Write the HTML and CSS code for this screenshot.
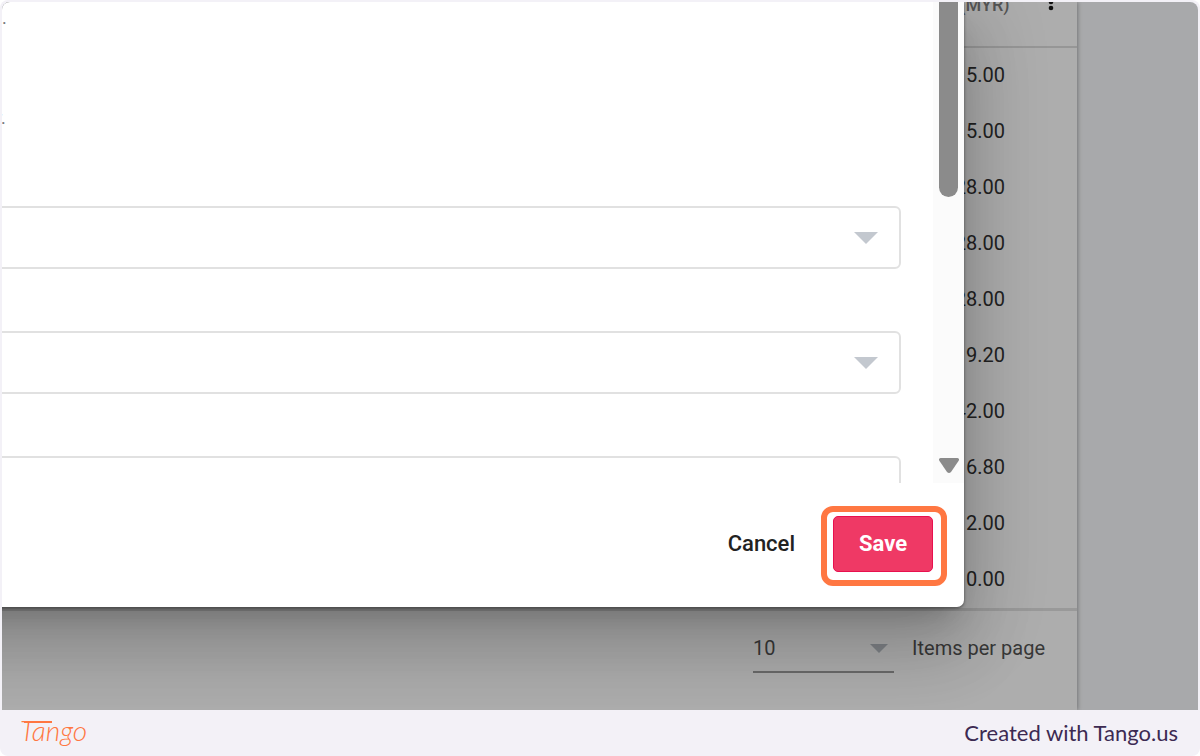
FILE: index.html
```html
<!DOCTYPE html>
<html lang="en">
<head>
<meta charset="utf-8">
<title>Save changes</title>
<meta name="viewport" content="width=device-width, initial-scale=1">
<link rel="stylesheet" href="styles.css">
</head>
<body>
<div class="frame">
  <main class="stage">
    <section class="panel">
      <table class="prices">
        <thead>
          <tr>
            <th scope="col">(MYR)
              <button class="column-menu" type="button" aria-label="Column menu">
                <svg width="6" height="22" viewBox="0 0 6 22"><circle cx="3" cy="7" r="2.3"/><circle cx="3" cy="13" r="2.3"/><circle cx="3" cy="19" r="2.3"/></svg>
              </button>
            </th>
          </tr>
        </thead>
        <tbody>
          <tr><td>5.00</td></tr>
          <tr><td>5.00</td></tr>
          <tr><td>28.00</td></tr>
          <tr><td>28.00</td></tr>
          <tr><td>28.00</td></tr>
          <tr><td>9.20</td></tr>
          <tr><td>42.00</td></tr>
          <tr><td>6.80</td></tr>
          <tr><td>2.00</td></tr>
          <tr><td>0.00</td></tr>
        </tbody>
      </table>
      <div class="paginator">
        <div class="page-size">
          <select id="page-size"><option>10</option></select>
          <svg class="page-arrow" width="18" height="9" viewBox="0 0 18 9"><path d="M0 0H18L9 9Z"/></svg>
        </div>
        <label for="page-size">Items per page</label>
      </div>
    </section>

    <div class="dialog" role="dialog" aria-label="Edit">
      <div class="dialog-body">
        <form class="fields">
          <p class="note">.</p>
          <p class="note note-second">r.</p>
          <div class="field">
            <select aria-label="First option"><option></option></select>
            <svg class="field-arrow" width="24" height="12" viewBox="0 0 24 12"><path d="M0 0H24L12 12Z"/></svg>
          </div>
          <div class="field">
            <select aria-label="Second option"><option></option></select>
            <svg class="field-arrow" width="24" height="12" viewBox="0 0 24 12"><path d="M0 0H24L12 12Z"/></svg>
          </div>
          <div class="field">
            <select aria-label="Third option"><option></option></select>
          </div>
        </form>
        <div class="scrollbar" aria-hidden="true">
          <div class="thumb"></div>
          <svg width="22" height="17" viewBox="0 0 22 17"><path d="M2.5 1H19.5Q22 1.5 20.5 4L13 15Q11 17 9 15L1.500 4Q0 1.500 2.500 1Z"/></svg>
        </div>
      </div>
      <div class="actions">
        <button class="cancel" type="button">Cancel</button>
        <div class="highlight"><button class="save" type="button">Save</button></div>
      </div>
    </div>
  </main>

  <footer class="credit">
    <svg class="logo" width="72" height="36" viewBox="0 0 72 36" role="img" aria-label="Tango">
      <text x="0" y="26">Tango</text>
      <path d="M4 7H32"/>
    </svg>
    <span>Created with Tango.us</span>
  </footer>
</div>
</body>
</html>
```
FILE: styles.css
```css
* {
  box-sizing: border-box;
}

body {
  margin: 0;
  background: #fff;
  color: #222;
  font-family: Roboto, "Liberation Sans", sans-serif;
  font-size: 20px;
  line-height: 24px;
}

button,
select {
  margin: 0;
  padding: 0;
  border: 0;
  background: none;
  color: inherit;
  font: inherit;
  appearance: none;
}

.frame {
  display: flex;
  flex-direction: column;
  height: 100vh;
  padding: 2px 2px 0;
  border-radius: 8px;
  background: #f3f1f7;
  overflow: hidden;
}

.stage {
  position: relative;
  flex: 1;
  min-height: 0;
  padding-right: 121px;
  border-radius: 8px 8px 0 0;
  background: #a8a9ab;
  overflow: hidden;
}

.panel {
  height: 100%;
  background: #adadad;
  box-shadow: 1px 0 4px rgba(0, 0, 0, 0.3);
}

.prices {
  width: 100%;
  border-collapse: separate;
  border-spacing: 0;
  text-align: right;
}

.prices th {
  height: 46px;
  padding: 0 23px 39px 0;
  border-bottom: 2px solid #969696;
  color: #555;
  font-size: 18px;
  font-weight: 500;
  line-height: 5px;
  vertical-align: bottom;
}

.column-menu {
  margin-left: 34px;
  vertical-align: bottom;
}

.column-menu svg {
  display: block;
  margin-top: -16px;
  margin-bottom: -4px;
  fill: #111;
}

.prices td {
  height: 56px;
  padding: 0 72px 2px 0;
}

.paginator {
  display: flex;
  align-items: center;
  justify-content: flex-end;
  gap: 18px;
  padding: 14px 32px 0 0;
  border-top: 3px solid #999;
  color: #383838;
}

.paginator label {
  padding-bottom: 2px;
}

.page-size {
  display: flex;
  align-items: center;
  width: 141px;
  height: 48px;
  border-bottom: 2px solid #6b6b6b;
}

.page-size select {
  flex: 1;
  height: 44px;
}

.page-arrow {
  margin-right: 6px;
  fill: #7f8387;
}

.dialog {
  position: absolute;
  inset: 0 234px 103px -100px;
  display: flex;
  flex-direction: column;
  border-radius: 0 0 7px 0;
  background: #fff;
  box-shadow: 0 1px 3px rgba(0, 0, 0, 0.5), 0 16px 26px -12px rgba(0, 0, 0, 0.2),
    0 42px 66px 5px rgba(0, 0, 0, 0.14), 0 16px 80px 14px rgba(0, 0, 0, 0.12);
}

.dialog-body {
  display: flex;
  flex: 1;
  min-height: 0;
  overflow: hidden;
}

.fields {
  flex: 1;
  padding: 0 32px 0 92px;
}

.note {
  height: 24px;
  margin: 0 0 76px;
  padding: 4px 0 0 8px;
  color: #777;
  font-size: 18px;
}

.note-second {
  margin-bottom: 80px;
  padding-left: 2px;
}

.field {
  display: flex;
  align-items: center;
  height: 63px;
  margin-bottom: 62px;
  border: 2px solid #e1e1e1;
  border-radius: 6px;
}

.field select {
  flex: 1;
  height: 100%;
}

.field-arrow {
  margin-right: 21px;
  fill: #c3c8cf;
}

.scrollbar {
  display: flex;
  flex-direction: column;
  align-items: center;
  justify-content: space-between;
  width: 31px;
  padding-bottom: 9px;
  background: #fbfbfb;
  fill: #8b8b8b;
}

.thumb {
  width: 19px;
  height: 195px;
  border-radius: 0 0 10px 10px;
  background: #8b8b8b;
}

.actions {
  display: flex;
  align-items: center;
  justify-content: flex-end;
  gap: 26px;
  padding: 23px 17px 21px;
  font-size: 22px;
  font-weight: 500;
}

.cancel {
  padding-bottom: 4px;
}

.highlight {
  padding: 4px 8px 8px 6px;
  border: 6px solid #ff7742;
  border-radius: 12px;
}

.save {
  display: block;
  width: 100px;
  height: 56px;
  border: 1px solid #e8104f;
  border-radius: 5px;
  background: #ef3965;
  color: #fff;
  font-weight: 700;
}

.credit {
  display: flex;
  align-items: center;
  justify-content: space-between;
  height: 46px;
  padding: 0 20px 0 18px;
  color: #3c2a52;
  font-family: Lato, "Open Sans", sans-serif;
  font-size: 22px;
}

.logo {
  overflow: visible;
}

.logo text {
  fill: #ff7742;
  font-family: Lato, sans-serif;
  font-size: 28px;
  font-style: italic;
  font-weight: 300;
}

.logo path {
  fill: none;
  stroke: #ff7742;
  stroke-width: 2;
}
```
